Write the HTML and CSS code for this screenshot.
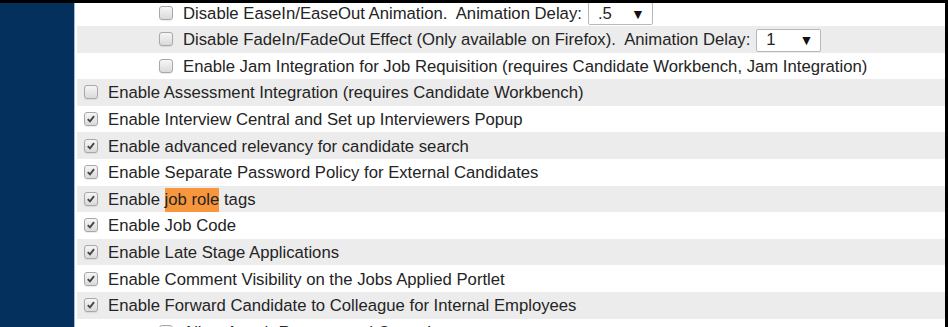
FILE: index.html
```html
<!DOCTYPE html>
<html lang="en">

<head>
  <meta charset="UTF-8" />
  <title>Recruiting Settings</title>
  <link rel="stylesheet" href="styles.css">
</head>

<body>
  <div class="frame">
    <aside class="nav"></aside>

    <main class="settings">
      <div class="row sub">
        <span class="box"></span>
        <span class="label">Disable EaseIn/EaseOut Animation.&nbsp; Animation Delay:</span>
        <span class="select"><span>.5</span><span class="arrow">&#9660;</span></span>
      </div>
      <div class="row sub">
        <span class="box"></span>
        <span class="label">Disable FadeIn/FadeOut Effect (Only available on Firefox).&nbsp; Animation Delay:</span>
        <span class="select"><span>1</span><span class="arrow">&#9660;</span></span>
      </div>
      <div class="row sub">
        <span class="box"></span>
        <span class="label">Enable Jam Integration for Job Requisition (requires Candidate Workbench, Jam Integration)</span>
      </div>
      <div class="row">
        <span class="box"></span>
        <span class="label">Enable Assessment Integration (requires Candidate Workbench)</span>
      </div>
      <div class="row">
        <span class="box checked"><svg viewBox="0 0 13 13"><path d="M3 6.6 L5.4 9 L9.8 3.4" /></svg></span>
        <span class="label">Enable Interview Central and Set up Interviewers Popup</span>
      </div>
      <div class="row">
        <span class="box checked"><svg viewBox="0 0 13 13"><path d="M3 6.6 L5.4 9 L9.8 3.4" /></svg></span>
        <span class="label">Enable advanced relevancy for candidate search</span>
      </div>
      <div class="row">
        <span class="box checked"><svg viewBox="0 0 13 13"><path d="M3 6.6 L5.4 9 L9.8 3.4" /></svg></span>
        <span class="label">Enable Separate Password Policy for External Candidates</span>
      </div>
      <div class="row">
        <span class="box checked"><svg viewBox="0 0 13 13"><path d="M3 6.6 L5.4 9 L9.8 3.4" /></svg></span>
        <span class="label">Enable <mark class="hit">job role</mark> tags</span>
      </div>
      <div class="row">
        <span class="box checked"><svg viewBox="0 0 13 13"><path d="M3 6.6 L5.4 9 L9.8 3.4" /></svg></span>
        <span class="label">Enable Job Code</span>
      </div>
      <div class="row">
        <span class="box checked"><svg viewBox="0 0 13 13"><path d="M3 6.6 L5.4 9 L9.8 3.4" /></svg></span>
        <span class="label">Enable Late Stage Applications</span>
      </div>
      <div class="row">
        <span class="box checked"><svg viewBox="0 0 13 13"><path d="M3 6.6 L5.4 9 L9.8 3.4" /></svg></span>
        <span class="label">Enable Comment Visibility on the Jobs Applied Portlet</span>
      </div>
      <div class="row">
        <span class="box checked"><svg viewBox="0 0 13 13"><path d="M3 6.6 L5.4 9 L9.8 3.4" /></svg></span>
        <span class="label">Enable Forward Candidate to Colleague for Internal Employees</span>
      </div>
      <div class="row sub">
        <span class="box checked"><svg viewBox="0 0 13 13"><path d="M3 6.6 L5.4 9 L9.8 3.4" /></svg></span>
        <span class="label">Allow Attach Resume and Cover Letter</span>
      </div>
    </main>
  </div>
</body>

</html>
```

FILE: styles.css
```css
* {
  margin: 0;
  padding: 0;
  box-sizing: border-box;
}

html, body {
  width: 100vw;
  height: 100vh;
  overflow: hidden;
  background: #fff;
  font-family: Arial, "Liberation Sans", sans-serif;
}

.frame {
  display: flex;
  width: 948px;
  height: 327px;
  border-top: 3px solid #000;
  border-right: 3px solid #000;
  overflow: hidden;
}

.nav {
  flex: none;
  width: 75px;
  background: #04305e;
  border-right: 1px solid #9fbad6;
}

.settings {
  flex: 1;
  padding-left: 2px;
  margin-top: -3.6px;
}

.row {
  display: flex;
  align-items: center;
  height: 26.6px;
  padding-top: 2px;
  padding-left: 7px;
  font-size: 16.7px;
  color: #242424;
  white-space: nowrap;
}

.row:nth-child(even) {
  background: #ececec;
}

.row.sub {
  padding-left: 82px;
}

.box {
  flex: none;
  width: 14px;
  height: 14px;
  margin-right: 10px;
  border: 1px solid #a8a8a8;
  border-radius: 3px;
  background: linear-gradient(#f6f6f6, #dadada);
  box-shadow: 0 1px 1px rgba(0, 0, 0, 0.08);
  position: relative;
  top: -1px;
}

.box svg {
  display: block;
  width: 12px;
  height: 12px;
}

.box path {
  fill: none;
  stroke: #444;
  stroke-width: 2;
}

.hit {
  background: #f7963c;
  color: #242424;
  padding: 2px 0 3px;
}

.select {
  display: inline-flex;
  align-items: center;
  justify-content: space-between;
  width: 65px;
  height: 23px;
  margin-left: 6px;
  padding: 0 7px 0 9px;
  border: 1px solid #b8b8b8;
  border-radius: 2px;
  background: #fff;
}

.select .arrow {
  font-size: 14px;
  color: #111;
}
```
